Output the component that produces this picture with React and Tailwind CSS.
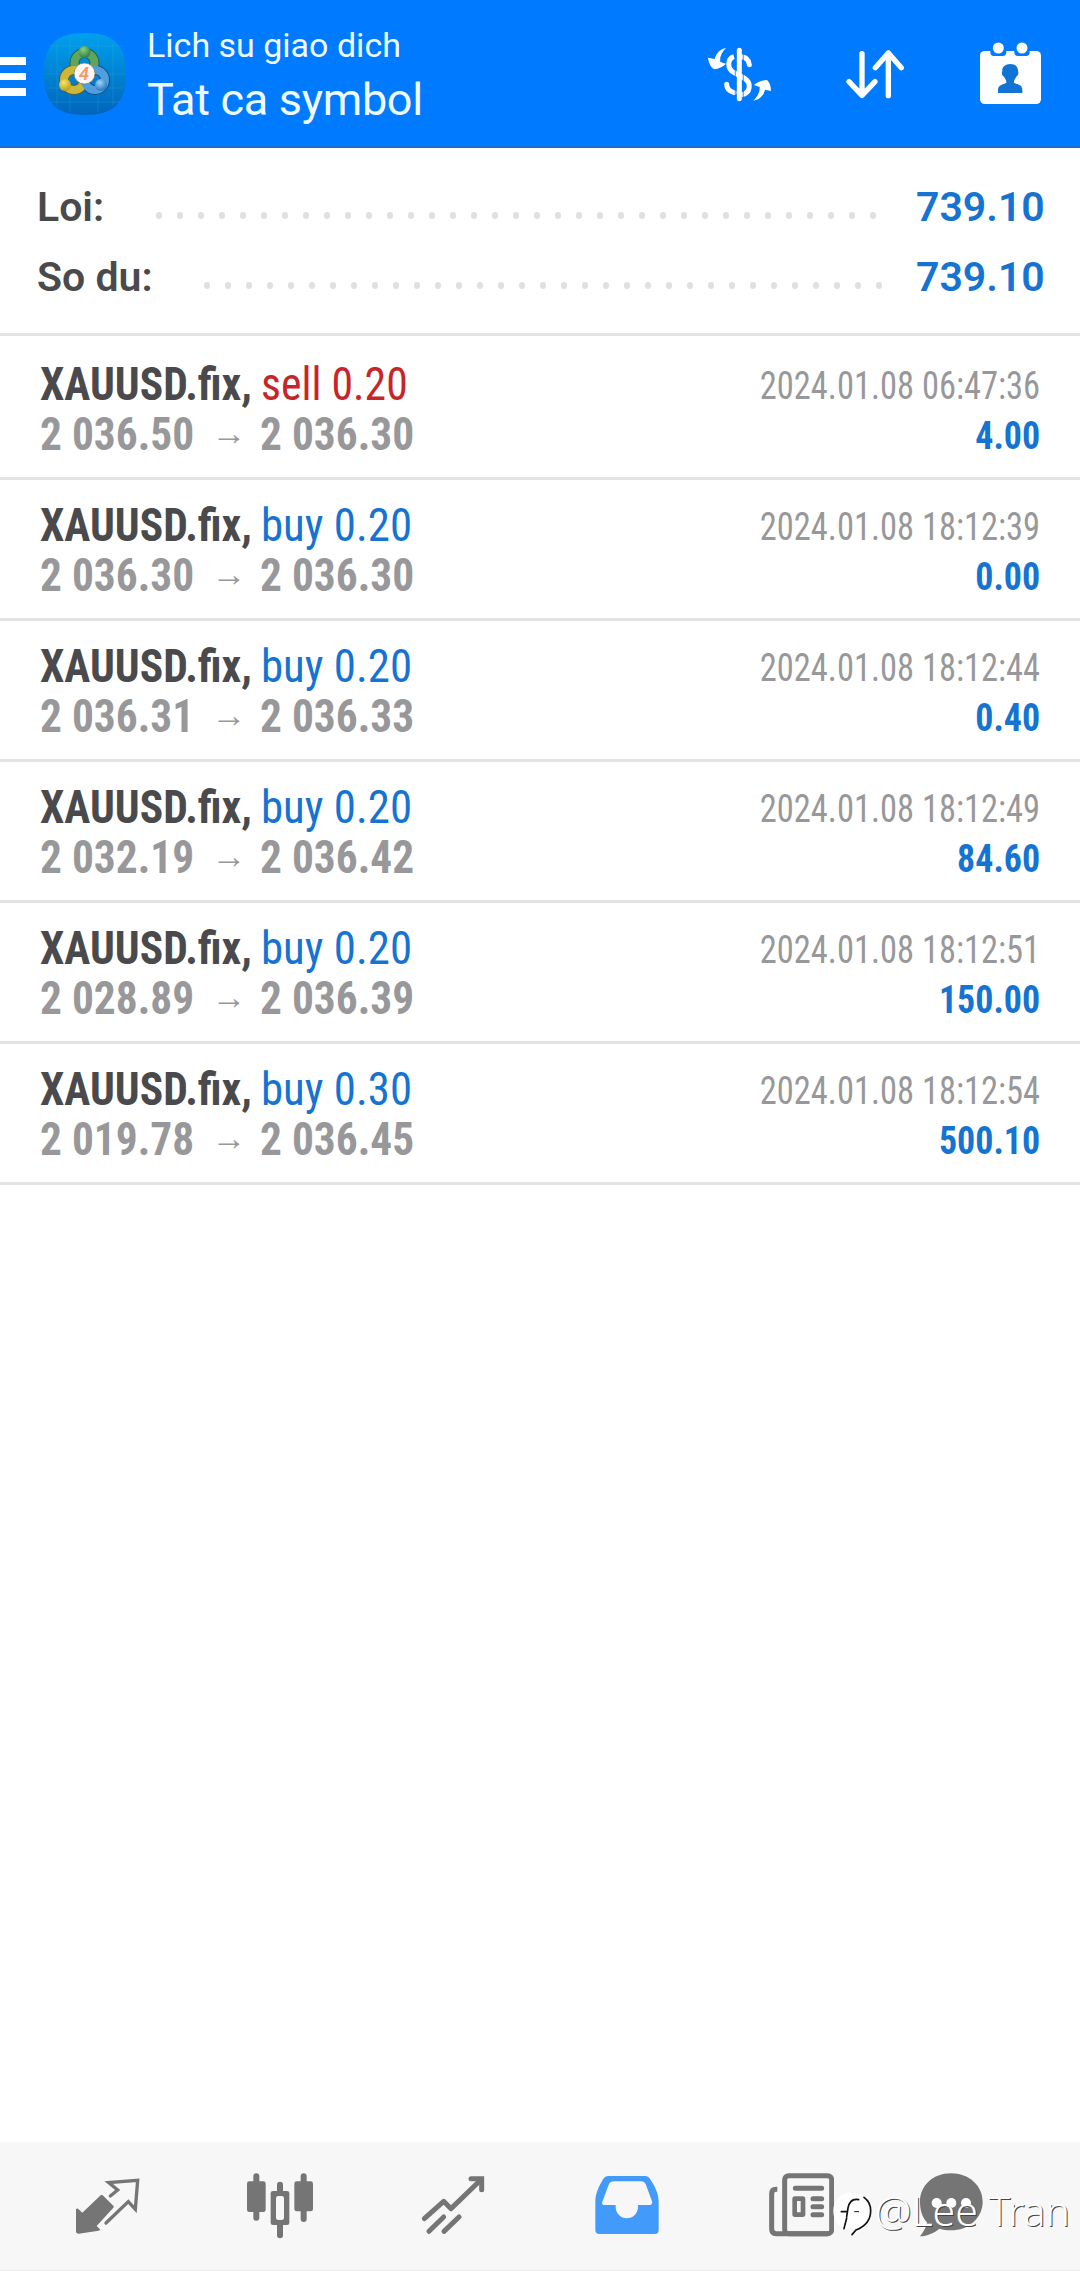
import React from 'react';

const trades = [
  { side: 'sell', volume: '0.20', open: '2 036.50', close: '2 036.30', time: '2024.01.08 06:47:36', profit: '4.00' },
  { side: 'buy', volume: '0.20', open: '2 036.30', close: '2 036.30', time: '2024.01.08 18:12:39', profit: '0.00' },
  { side: 'buy', volume: '0.20', open: '2 036.31', close: '2 036.33', time: '2024.01.08 18:12:44', profit: '0.40' },
  { side: 'buy', volume: '0.20', open: '2 032.19', close: '2 036.42', time: '2024.01.08 18:12:49', profit: '84.60' },
  { side: 'buy', volume: '0.20', open: '2 028.89', close: '2 036.39', time: '2024.01.08 18:12:51', profit: '150.00' },
  { side: 'buy', volume: '0.30', open: '2 019.78', close: '2 036.45', time: '2024.01.08 18:12:54', profit: '500.10' },
];

const AppLogo = () => (
  <svg className="h-[84px] w-[84px]" viewBox="0 0 84 84">
    <defs>
      <linearGradient id="tile" x1="0" y1="0" x2="0" y2="1">
        <stop offset="0" stopColor="#00a0ee" />
        <stop offset="0.5" stopColor="#0083d2" />
        <stop offset="1" stopColor="#0065bd" />
      </linearGradient>
      <radialGradient id="green" cx="0.4" cy="0.3" r="0.8">
        <stop offset="0" stopColor="#8fd07c" />
        <stop offset="1" stopColor="#1d7440" />
      </radialGradient>
      <radialGradient id="yellow" cx="0.4" cy="0.3" r="0.8">
        <stop offset="0" stopColor="#f4e468" />
        <stop offset="1" stopColor="#b3960f" />
      </radialGradient>
      <radialGradient id="blue" cx="0.4" cy="0.3" r="0.8">
        <stop offset="0" stopColor="#9ad7fa" />
        <stop offset="1" stopColor="#1767b3" />
      </radialGradient>
    </defs>
    <path d="M42 1C71 1 83 13 83 42S71 83 42 83 1 71 1 42 13 1 42 1Z" fill="url(#tile)" />
    <path d="M14 11V73M27 4V80M55 4V80M70 11V73M4 14H80M2 42H82M4 56H80M7 70H77" stroke="#48b4e6" strokeWidth="0.6" opacity="0.4" />
    <g fill="none">
      <circle cx="41.5" cy="31" r="10" stroke="#1f5f4b" strokeWidth="10" />
      <circle cx="31" cy="48" r="10" stroke="#5b5f2c" strokeWidth="10" />
      <circle cx="52" cy="48" r="10" stroke="#124d86" strokeWidth="10" />
      <circle cx="41.5" cy="31" r="10" stroke="#5fa65c" strokeWidth="8" />
      <circle cx="31" cy="48" r="10" stroke="#cdb73a" strokeWidth="8" />
      <circle cx="52" cy="48" r="10" stroke="#4f9fdc" strokeWidth="8" />
    </g>
    <circle cx="41.5" cy="20" r="6" fill="url(#green)" />
    <circle cx="22" cy="53" r="6" fill="url(#yellow)" />
    <circle cx="58" cy="53" r="6" fill="url(#blue)" />
    <circle cx="41.5" cy="41.5" r="10.5" fill="#fdf6f2" stroke="#8a7a55" strokeWidth="0.7" />
    <text x="41" y="48" textAnchor="middle" fontSize="18" fontStyle="italic" fontFamily="Roboto, sans-serif" fontWeight="600" fill="#ee9a6c">4</text>
  </svg>
);

const CurrencyIcon = () => (
  <svg className="h-[64px] w-[67px]" viewBox="78 63 201 192">
    <g fill="none" stroke="#fff" strokeWidth="15">
      <path d="M178 91V236" strokeLinecap="round" />
      <path d="M162 110C142 116 140 146 162 158L192 174C216 188 212 220 184 224" />
      <path d="M184 110C200 112 207 120 208 134" strokeLinecap="round" />
      <path d="M162 218C148 214 140 206 140 193" strokeLinecap="round" />
    </g>
    <path d="M166 96V232M190 96V232" stroke="#007aff" strokeWidth="4" opacity="0.6" />
    <path d="M138 84C122 86 108 100 104 117L84 113C86 128 92 142 103 148C116 146 128 141 138 131L121 126C119 112 124 98 138 84Z" fill="#fff" />
    <path d="M220 242C236 240 251 228 255 209L273 213C273 200 269 186 260 180C246 181 232 186 222 195L239 201C240 216 232 231 220 242Z" fill="#fff" />
  </svg>
);

const SortIcon = () => (
  <svg className="h-[64px] w-[60px]" viewBox="496 63 180 192" fill="none" stroke="#fff" strokeWidth="16" strokeLinecap="round" strokeLinejoin="round">
    <path d="M547 101V226M508 185L547 226L586 185" />
    <path d="M626 227V99M587 143L626 99L665 143" />
  </svg>
);

const CalendarIcon = () => (
  <svg className="h-[64px] w-[63px]" viewBox="897 63 189 192">
    <rect x="900" y="93" width="183" height="159" rx="14" fill="#fff" />
    <path d="M931 90V97Q931 108 942 108H968Q979 108 979 97V90ZM1003 90V97Q1003 108 1014 108H1038Q1049 108 1049 97V90Z" fill="#007aff" />
    <circle cx="955" cy="84" r="16.5" fill="#fff" />
    <circle cx="1026" cy="84" r="16.5" fill="#fff" />
    <path d="M991 132C1008 132 1015 143 1014 154C1017 160 1014 167 1009 170C1005 178 1001 181 1002 188C1014 194 1027 195 1027 209V219H954V209C954 195 968 194 979 188C980 181 976 178 972 170C966 167 964 160 967 154C965 143 974 132 991 132Z" fill="#1173d4" />
  </svg>
);

const QuotesIcon = () => (
  <svg className="h-[70px] w-[70px]" viewBox="216 120 210 210">
    <path d="M302 196Q305 193 308 196L340 227Q343 230 340 233L290 288L300 298Q300 302 296 302L236 311Q228 311 228 304V238Q230 234 234 236L247 248Z" fill="#757575" />
    <path d="M331 198L353 180L326 158L413 151L406 238L385 215L318 279" fill="none" stroke="#757575" strokeWidth="10" strokeLinecap="round" strokeLinejoin="miter" />
  </svg>
);

const ChartIcon = () => (
  <svg className="h-[70px] w-[70px]" viewBox="735 120 210 210" fill="#757575">
    <rect x="760" y="130" width="18" height="142" rx="9" />
    <rect x="741" y="154" width="56" height="92" rx="7" />
    <rect x="902" y="130" width="18" height="146" rx="9" />
    <rect x="883" y="154" width="56" height="90" rx="7" />
    <rect x="831" y="155" width="18" height="170" rx="9" />
    <rect x="812" y="183" width="56" height="102" rx="7" />
    <rect x="828" y="198" width="24" height="72" rx="7" fill="#f7f7f7" />
  </svg>
);

const TradeIcon = () => (
  <svg className="h-[70px] w-[70px]" viewBox="174 120 210 210" fill="none" stroke="#757575" strokeWidth="15" strokeLinecap="round">
    <path d="M193 266L251 214L273 236L362 150" strokeLinejoin="round" />
    <path d="M333 146H365V179" />
    <path d="M207 304L251 261M252 304L297 261" />
    <path d="M352 142H369V160Z" fill="#757575" stroke="none" />
  </svg>
);

const HistoryIcon = () => (
  <svg className="h-[70px] w-[70px]" viewBox="693 120 210 210">
    <path d="M744 138H857Q865 138 870 146C885 170 896 190 896 215V300Q896 312 884 312H718Q706 312 706 300V215C706 190 716 170 730 146Q735 138 744 138Z" fill="#429bfb" />
    <path d="M760 154H844Q853 154 857 162L876 214Q879 225 868 225H834V231A33 33 0 0 1 767 231V225H734Q724 225 727 215L747 162Q751 154 760 154Z" fill="#f7f7f7" />
  </svg>
);

const NewsIcon = () => (
  <svg className="h-[70px] w-[70px]" viewBox="132 120 210 210" fill="none" stroke="#757575">
    <path d="M172 178H168Q155 178 155 192V297Q155 311 168 311H324" strokeWidth="15" />
    <rect x="194" y="137" width="141" height="174" rx="12" strokeWidth="15" />
    <path d="M226 175H305M279 206H305M279 230H305M279 254H305" strokeWidth="15" strokeLinecap="round" />
    <rect x="224" y="206" width="25" height="48" rx="1" strokeWidth="14" />
  </svg>
);

const ChatIcon = () => (
  <svg className="h-[70px] w-[70px]" viewBox="588 120 210 210">
    <path d="M693 130C747 130 788 167 788 215S747 301 693 301C680 301 668 299 659 296C642 309 622 318 600 319C609 308 619 293 621 277C607 262 600 240 600 215C600 167 639 130 693 130Z" fill="#757575" />
    <g fill="#fff">
      <circle cx="650" cy="219" r="15" />
      <circle cx="694" cy="219" r="15" />
      <circle cx="738" cy="219" r="15" />
    </g>
  </svg>
);

const SummaryRow = ({ label, value, dots, dotsClass }) => (
  <div className="flex h-[70px] items-center justify-between pr-[38px] pl-[37px] text-[41px] leading-[70px] font-semibold">
    <span className="text-[#4a4a4d]">{label}</span>
    <div className={`flex flex-1 justify-end gap-[14.5px] pt-[17px] ${dotsClass}`}>
      {Array.from({ length: dots }, (_, i) => (
        <i key={i} className="h-[6.5px] w-[6.5px] rounded-full bg-[#e0e0e0]" />
      ))}
    </div>
    <span className="w-[126px] text-right whitespace-nowrap text-[#1573d2]">{value}</span>
  </div>
);

const TradeRow = ({ trade }) => (
  <div className="flex h-[141px] justify-between border-b-3 border-[#e3e3e3] px-10 pt-5 [font-stretch:75%]">
    <div className="text-[46px] leading-[50px] whitespace-nowrap">
      <div className="flex">
        <span className="w-[221px] origin-left scale-x-[0.946] font-bold text-[#4a4a4d]">XAUUSD.fix,</span>
        <span className={trade.side === 'sell' ? 'origin-left scale-x-[0.95] text-[#c6252b]' : 'origin-left scale-x-[0.975] text-[#1573d2]'}>
          {trade.side} {trade.volume}
        </span>
      </div>
      <div className="flex font-bold text-[#98989b]">
        <span className="w-[154px] origin-left scale-x-[0.943]">{trade.open}</span>
        <span className="w-[66px] pl-1 text-center text-[35px]">→</span>
        <span className="origin-left scale-x-[0.943]">{trade.close}</span>
      </div>
    </div>
    <div className="pt-[2px] text-right text-[38px] leading-[50px]">
      <div className="origin-right scale-x-[0.907] text-[#98989b]">{trade.time}</div>
      <div className="origin-right scale-x-[0.945] font-bold text-[#1573d2]">{trade.profit}</div>
    </div>
  </div>
);

export default function App() {
  return (
    <div className="flex h-[2271px] w-[1080px] flex-col overflow-hidden bg-white font-[Roboto,sans-serif]">
      <header className="flex h-[148px] shrink-0 items-start border-b-2 border-[#1a70c8] bg-[#007aff] pr-[38px]">
        <div className="flex w-[26px] flex-col gap-2 pt-[57px]">
          <div className="h-[7.5px] bg-white" />
          <div className="h-[7.5px] bg-white" />
          <div className="h-[7.5px] bg-white" />
        </div>
        <div className="ml-[17px] pt-[32px]">
          <AppLogo />
        </div>
        <div className="ml-5 flex-1 pt-[20px] text-[#f0fbff]">
          <div className="text-[34px] leading-[50px]">Lich su giao dich</div>
          <div className="text-[45px] leading-[60px] tracking-[-0.3px]">Tat ca symbol</div>
        </div>
        <div className="flex pt-[41px]">
          <CurrencyIcon />
          <div className="ml-[72px]"><SortIcon /></div>
          <div className="ml-[74px]"><CalendarIcon /></div>
        </div>
      </header>

      <section className="h-[188px] shrink-0 border-b-3 border-[#e3e3e3] pt-[24px]">
        <SummaryRow label="Loi:" value="739.10" dots={35} dotsClass="pr-10" />
        <SummaryRow label="So du:" value="739.10" dots={33} dotsClass="pr-[34px]" />
      </section>

      <main className="flex-1 pt-[3px]">
        {trades.map((trade) => (
          <TradeRow key={trade.time} trade={trade} />
        ))}
      </main>

      <nav className="relative flex h-[129px] shrink-0 gap-[103px] border-b border-[#ececec] bg-[#f7f7f7] pt-[28px] pl-[72px]">
        <QuotesIcon />
        <ChartIcon />
        <TradeIcon />
        <HistoryIcon />
        <NewsIcon />
        <div className="-ml-[21px]"><ChatIcon /></div>

        {/* Marca de agua del autor */}
        <div className="absolute top-[50px] left-[833px] flex items-center whitespace-nowrap">
          <svg className="h-[44px] w-[42px]" viewBox="339 188 126 132">
            <path d="M384 190C360 194 340 216 340 244C340 270 352 288 374 296L398 294L396 316C424 308 454 284 454 244C454 214 434 194 412 192Z" fill="#fff" />
            <g fill="none" stroke="#111" strokeLinecap="round">
              <path d="M432 204C446 214 452 228 452 244C452 278 428 294 408 302L396 316" strokeWidth="5" />
              <path d="M416 211C400 208 388 216 384 236L380 262M380 266L372 298M364 247H382" strokeWidth="5" />
              <path d="M404 247H416" strokeWidth="3" />
            </g>
          </svg>
          <span className="-mt-[9px] text-[41px] leading-[46px] font-light text-white [font-family:'Noto_Sans',sans-serif] [text-shadow:1px_1px_0px_#444]">@Lee Tran</span>
        </div>
      </nav>
    </div>
  );
}
